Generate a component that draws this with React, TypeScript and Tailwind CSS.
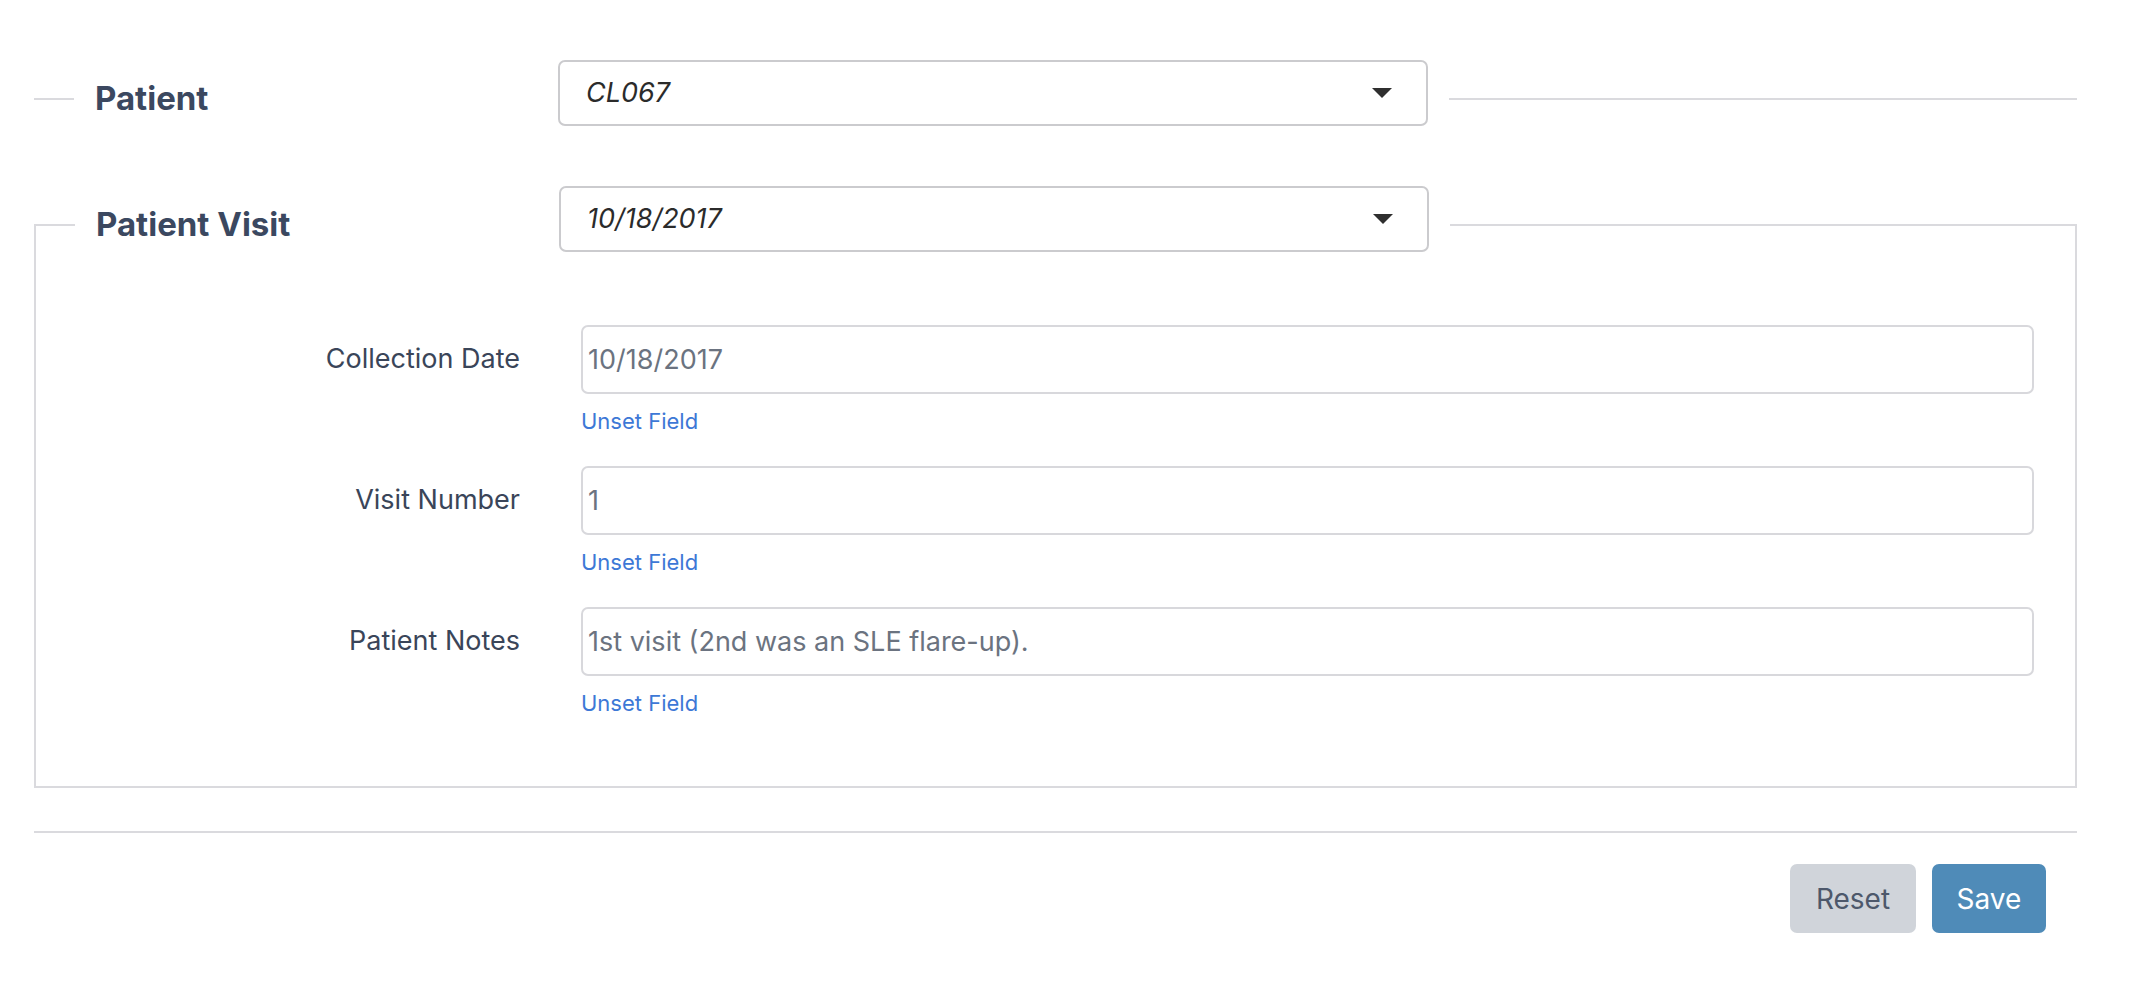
const line = 'border-[#dadade]'

const Select = ({ value }: { value: string }) => {
  return (
    <div className="mb-[12px] flex h-[66px] w-[870px] items-center justify-between rounded-[7px] border-2 border-[#cbcbce] bg-white pl-[26px] pr-[34px]">
      <span className="text-[27px] italic text-[#2b2b2b]">{value}</span>
      <svg width="20" height="10" viewBox="0 0 20 10">
        <path d="M0 0 H20 L10 10 Z" fill="#2f2f2f" />
      </svg>
    </div>
  )
}

const Legend = ({ title, value }: { title: string; value: string }) => {
  return (
    <legend className="px-[21px]">
      <div className="flex items-center">
        <span className="w-[463px] text-[33px] font-bold text-[#3b4860]">{title}</span>
        <Select value={value} />
      </div>
    </legend>
  )
}

const fields = [
  { label: 'Collection Date', value: '10/18/2017' },
  { label: 'Visit Number', value: '1' },
  { label: 'Patient Notes', value: '1st visit (2nd was an SLE flare-up).' },
]

const App = () => {
  return (
    <div className="min-h-screen bg-white pl-[34px] pr-[73px] pt-[60px] font-['Inter','Liberation_Sans',sans-serif]">
      <fieldset className={`border-t-2 ${line} pl-[40px]`}>
        <Legend title="Patient" value="CL067" />
      </fieldset>

      <fieldset className={`mt-[48px] border-2 ${line} pb-[66px] pl-[39px] pr-[41px] pt-[61px]`}>
        <Legend title="Patient Visit" value="10/18/2017" />
        <div className="grid grid-cols-[445px_1fr] gap-x-[61px] gap-y-[28px]">
          {fields.map((f) => (
            <div key={f.label} className="contents">
              <div className="flex h-[69px] items-center justify-end text-[27px] text-[#3a4559]">
                {f.label}
              </div>
              <div>
                <input
                  readOnly
                  value={f.value}
                  className="h-[69px] w-full rounded-[7px] border-2 border-[#d8d8dc] bg-white px-[5px] text-[27px] text-[#6b7380] outline-none"
                />
                <div className="mt-[11px] text-[22px] leading-[33px] text-[#3d78d6]">Unset Field</div>
              </div>
            </div>
          ))}
        </div>
      </fieldset>

      <hr className={`mt-[43px] border-t-2 ${line}`} />

      <div className="mt-[31px] flex justify-end gap-[16px] pr-[31px]">
        <button className="h-[69px] w-[126px] rounded-[7px] bg-[#d0d4da] text-[28px] text-[#4d586b]">Reset</button>
        <button className="h-[69px] w-[114px] rounded-[7px] bg-[#4f8bb8] text-[28px] text-white">Save</button>
      </div>
    </div>
  )
}

export default App
